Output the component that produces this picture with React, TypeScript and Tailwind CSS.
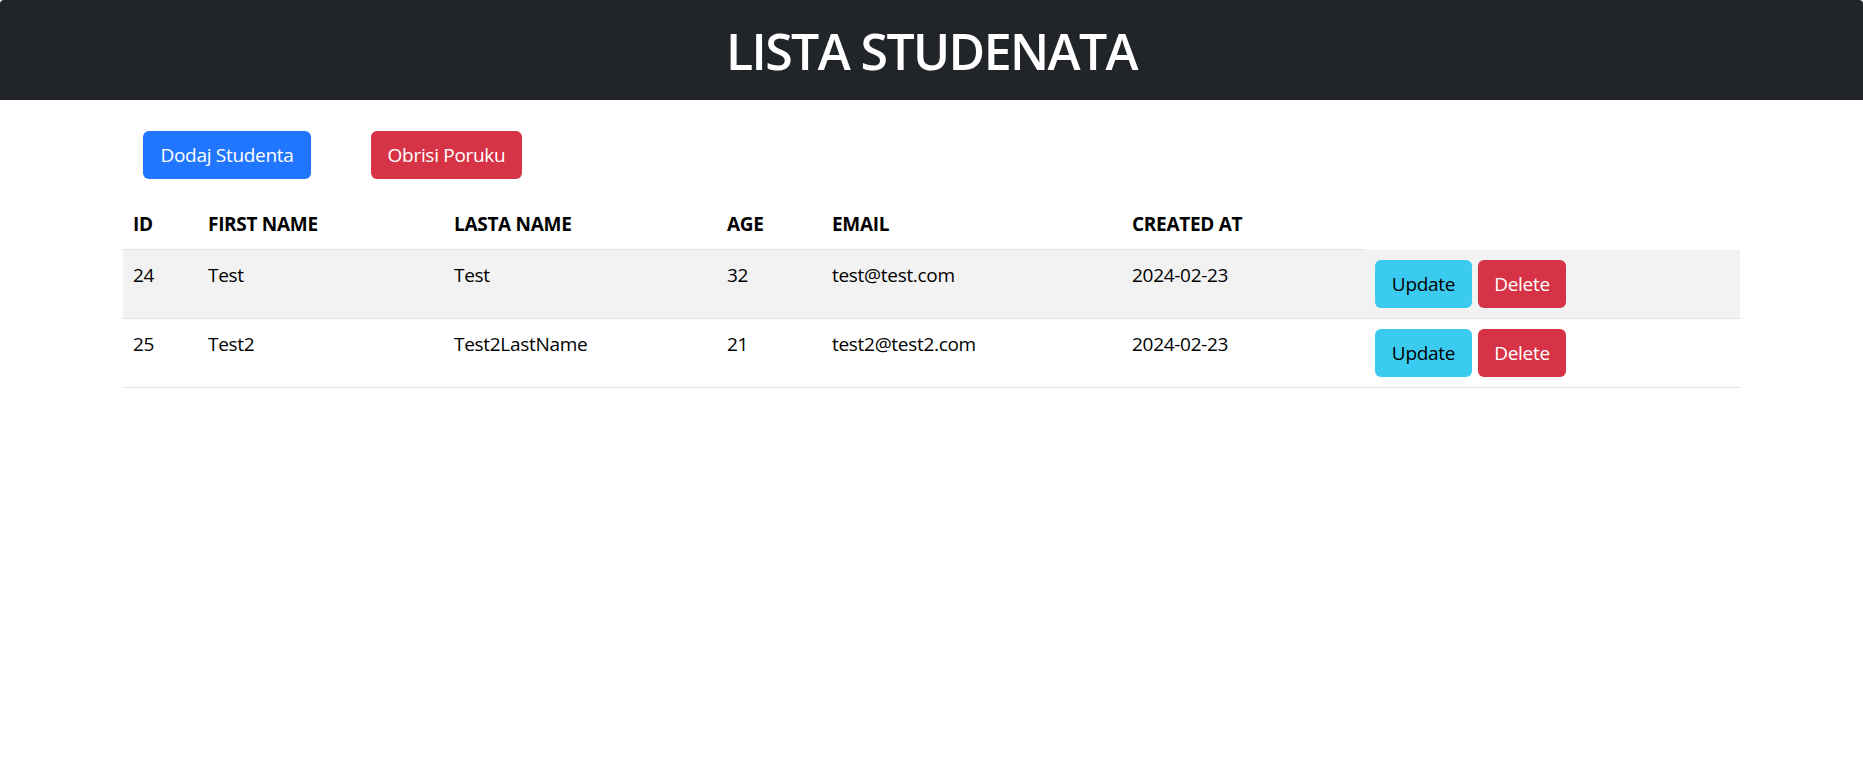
import React from "react";

type Student = {
  id: number;
  firstName: string;
  lastName: string;
  age: number;
  email: string;
  createdAt: string;
};

const students: Student[] = [
  { id: 24, firstName: "Test", lastName: "Test", age: 32, email: "test@test.com", createdAt: "2024-02-23" },
  { id: 25, firstName: "Test2", lastName: "Test2LastName", age: 21, email: "test2@test2.com", createdAt: "2024-02-23" },
];

const cell = "p-[10px] align-top border-b border-[#dee2e6]";

const App = () => {
  return (
    <div className="min-h-screen bg-white text-black font-['Open_Sans',_'Noto_Sans',_sans-serif]">
      <header className="h-[100px] bg-[#212529] flex items-center justify-center rounded-t-[4px]">
        <h1 className="text-white text-[50px] font-semibold leading-none tracking-[-1.6px] pt-[2px]">LISTA STUDENATA</h1>
      </header>

      <div className="w-[1617px] mx-auto">
        <div className="flex gap-[60px] pl-[20px] pt-[31px]">
          <button className="h-[48px] w-[168px] rounded-[6px] bg-[#2176ff] text-white text-[19px] tracking-[-0.3px]">
            Dodaj Studenta
          </button>
          <button className="h-[48px] w-[151px] rounded-[6px] bg-[#d73347] text-white text-[19px] tracking-[-0.3px]">
            Obrisi Poruku
          </button>
        </div>

        <table className="mt-[20px] w-full border-collapse text-[19px] leading-[30px] tracking-[-0.3px]">
          <colgroup>
            <col className="w-[75px]" />
            <col className="w-[246px]" />
            <col className="w-[273px]" />
            <col className="w-[105px]" />
            <col className="w-[300px]" />
            <col className="w-[243px]" />
            <col />
          </colgroup>
          <thead>
            <tr>
              {["ID", "FIRST NAME", "LASTA NAME", "AGE", "EMAIL", "CREATED AT"].map((h) => (
                <th key={h} className={"text-left font-bold " + cell}>
                  {h}
                </th>
              ))}
            </tr>
          </thead>
          <tbody>
            {students.map((s, i) => (
              <tr key={s.id} className={i % 2 === 0 ? "bg-[#f2f2f2]" : "bg-white"}>
                <td className={cell}>{s.id}</td>
                <td className={cell}>{s.firstName}</td>
                <td className={cell}>{s.lastName}</td>
                <td className={cell}>{s.age}</td>
                <td className={cell}>{s.email}</td>
                <td className={cell}>{s.createdAt}</td>
                <td className={cell}>
                  <div className="flex gap-[6px]">
                    <button className="h-[48px] w-[97px] rounded-[6px] bg-[#3bcbf0] text-black">
                      Update
                    </button>
                    <button className="h-[48px] w-[88px] rounded-[6px] bg-[#d73347] text-white">
                      Delete
                    </button>
                  </div>
                </td>
              </tr>
            ))}
          </tbody>
        </table>
      </div>
    </div>
  );
};

export default App;
